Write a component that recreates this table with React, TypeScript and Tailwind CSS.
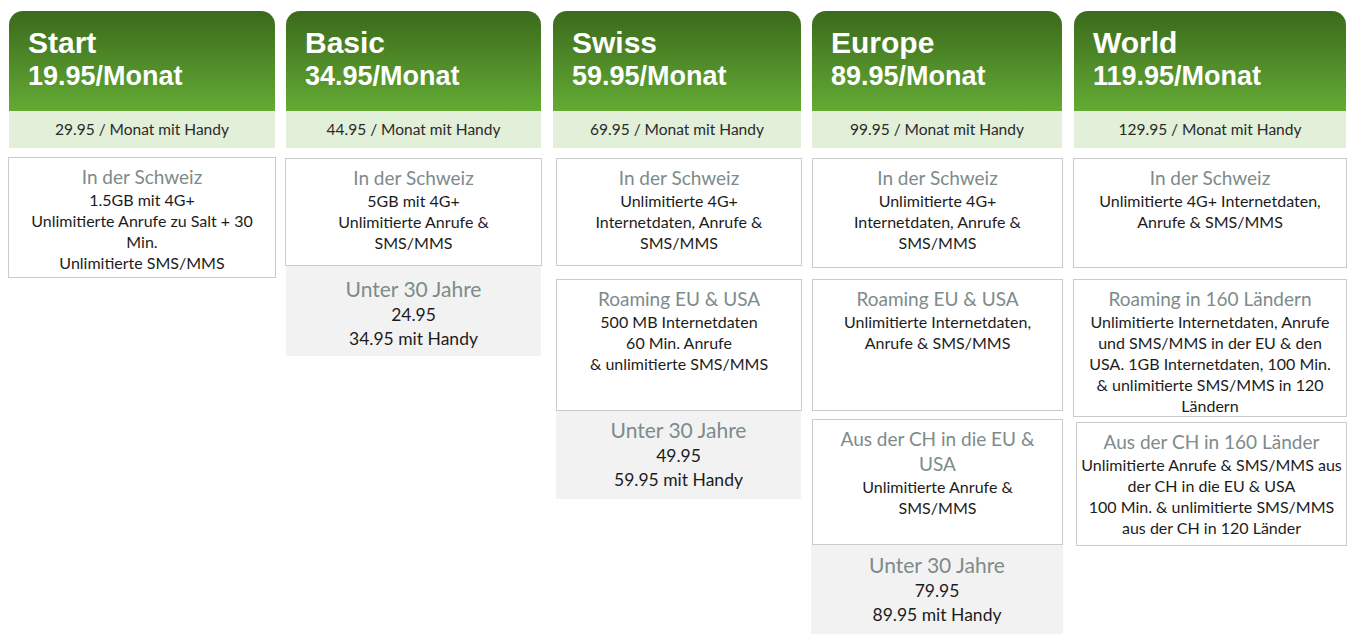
type Box = {
  title: string[];
  lines: string[];
  h: string;
};

type Plan = {
  name: string;
  price: string;
  handy: string;
  col: string;
  boxes: Box[];
  youth?: { price: string; handy: string; h: string };
};

const plans: Plan[] = [
  {
    name: "Start",
    price: "19.95/Monat",
    handy: "29.95 / Monat mit Handy",
    col: "w-[268px]",
    boxes: [
      {
        title: ["In der Schweiz"],
        lines: ["1.5GB mit 4G+", "Unlimitierte Anrufe zu Salt + 30", "Min.", "Unlimitierte SMS/MMS"],
        h: "h-[121px] mt-[9px]",
      },
    ],
  },
  {
    name: "Basic",
    price: "34.95/Monat",
    handy: "44.95 / Monat mit Handy",
    col: "w-[257px]",
    boxes: [
      {
        title: ["In der Schweiz"],
        lines: ["5GB mit 4G+", "Unlimitierte Anrufe &", "SMS/MMS"],
        h: "h-[108px] mt-[10px]",
      },
    ],
    youth: { price: "24.95", handy: "34.95 mit Handy", h: "h-[90px] mx-px pt-[9px]" },
  },
  {
    name: "Swiss",
    price: "59.95/Monat",
    handy: "69.95 / Monat mit Handy",
    col: "w-[250px]",
    boxes: [
      {
        title: ["In der Schweiz"],
        lines: ["Unlimitierte 4G+", "Internetdaten, Anrufe &", "SMS/MMS"],
        h: "h-[108px] mt-[10px] ml-[4px]",
      },
      {
        title: ["Roaming EU & USA"],
        lines: ["500 MB Internetdaten", "60 Min. Anrufe", "& unlimitierte SMS/MMS"],
        h: "h-[132px] mt-[13px] ml-[4px]",
      },
    ],
    youth: { price: "49.95", handy: "59.95 mit Handy", h: "h-[88px] ml-[4px] mr-px pt-[5px]" },
  },
  {
    name: "Europe",
    price: "89.95/Monat",
    handy: "99.95 / Monat mit Handy",
    col: "w-[252px]",
    boxes: [
      {
        title: ["In der Schweiz"],
        lines: ["Unlimitierte 4G+", "Internetdaten, Anrufe &", "SMS/MMS"],
        h: "h-[110px] mt-[10px] ml-px",
      },
      {
        title: ["Roaming EU & USA"],
        lines: ["Unlimitierte Internetdaten,", "Anrufe & SMS/MMS"],
        h: "h-[132px] mt-[11px] ml-px",
      },
      {
        title: ["Aus der CH in die EU &", "USA"],
        lines: ["Unlimitierte Anrufe &", "SMS/MMS"],
        h: "h-[126px] mt-[8px] ml-px",
      },
    ],
    youth: { price: "79.95", handy: "89.95 mit Handy", h: "h-[89px] pt-[6px]" },
  },
  {
    name: "World",
    price: "119.95/Monat",
    handy: "129.95 / Monat mit Handy",
    col: "w-[274px]",
    boxes: [
      {
        title: ["In der Schweiz"],
        lines: ["Unlimitierte 4G+ Internetdaten,", "Anrufe & SMS/MMS"],
        h: "h-[110px] mt-[10px]",
      },
      {
        title: ["Roaming in 160 Ländern"],
        lines: [
          "Unlimitierte Internetdaten, Anrufe",
          "und SMS/MMS in der EU & den",
          "USA. 1GB Internetdaten, 100 Min.",
          "& unlimitierte SMS/MMS in 120",
          "Ländern",
        ],
        h: "h-[138px] mt-[11px]",
      },
      {
        title: ["Aus der CH in 160 Länder"],
        lines: [
          "Unlimitierte Anrufe & SMS/MMS aus",
          "der CH in die EU & USA",
          "100 Min. & unlimitierte SMS/MMS",
          "aus der CH in 120 Länder",
        ],
        h: "h-[124px] mt-[5px] ml-[3px]",
      },
    ],
  },
];

const body = { fontFamily: "Lato, 'Open Sans', sans-serif" };
const head = { fontFamily: "'Liberation Sans', Arial, sans-serif" };

function InfoBox({ box }: { box: Box }) {
  return (
    <div className={`border-[1.5px] border-[#cbcbcb] bg-white pt-[6px] text-center ${box.h}`}>
      {box.title.map((t) => (
        <div key={t} className="whitespace-nowrap text-[19px] leading-[25px] text-[#7d8b8b]">
          {t}
        </div>
      ))}
      {box.lines.map((l, i) => (
        <div key={i} className="whitespace-nowrap text-[16px] leading-[21px] text-[#1c1c1c]">
          {l}
        </div>
      ))}
    </div>
  );
}

export default function App() {
  return (
    <div className="h-[644px] w-[1354px] bg-white" style={body}>
      <div className="flex gap-[9px] pl-[8px] pt-[11px]">
        {plans.map((p, idx) => (
          <div
            key={p.name}
            className={`flex flex-col ${p.col} ${idx === 2 ? "ml-px" : ""} ${idx === 4 ? "ml-px" : ""}`}
          >
            <div className="mx-px">
              <div
                className="h-[100px] rounded-t-[14px] bg-gradient-to-b from-[#3b6a1b] to-[#64ab35] pl-[19px] pt-[14px] text-white"
                style={head}
              >
                <div className="text-[30px] font-bold leading-[35px]">{p.name}</div>
                <div className="text-[27px] font-bold leading-[32px]">{p.price}</div>
              </div>
              <div className="flex h-[37px] items-center justify-center bg-[#e2efd9] text-[15.5px] text-[#2a2a2a]">
                {p.handy}
              </div>
            </div>
            {p.boxes.map((b, i) => (
              <InfoBox key={i} box={b} />
            ))}
            {p.youth && (
              <div className={`bg-[#f2f2f2] text-center ${p.youth.h}`}>
                <div className="text-[21px] leading-[28px] text-[#7d8b8b]">Unter 30 Jahre</div>
                <div className="text-[17.5px] leading-[24px] text-[#1c1c1c]">{p.youth.price}</div>
                <div className="text-[17.5px] leading-[24px] text-[#1c1c1c]">{p.youth.handy}</div>
              </div>
            )}
          </div>
        ))}
      </div>
    </div>
  );
}
